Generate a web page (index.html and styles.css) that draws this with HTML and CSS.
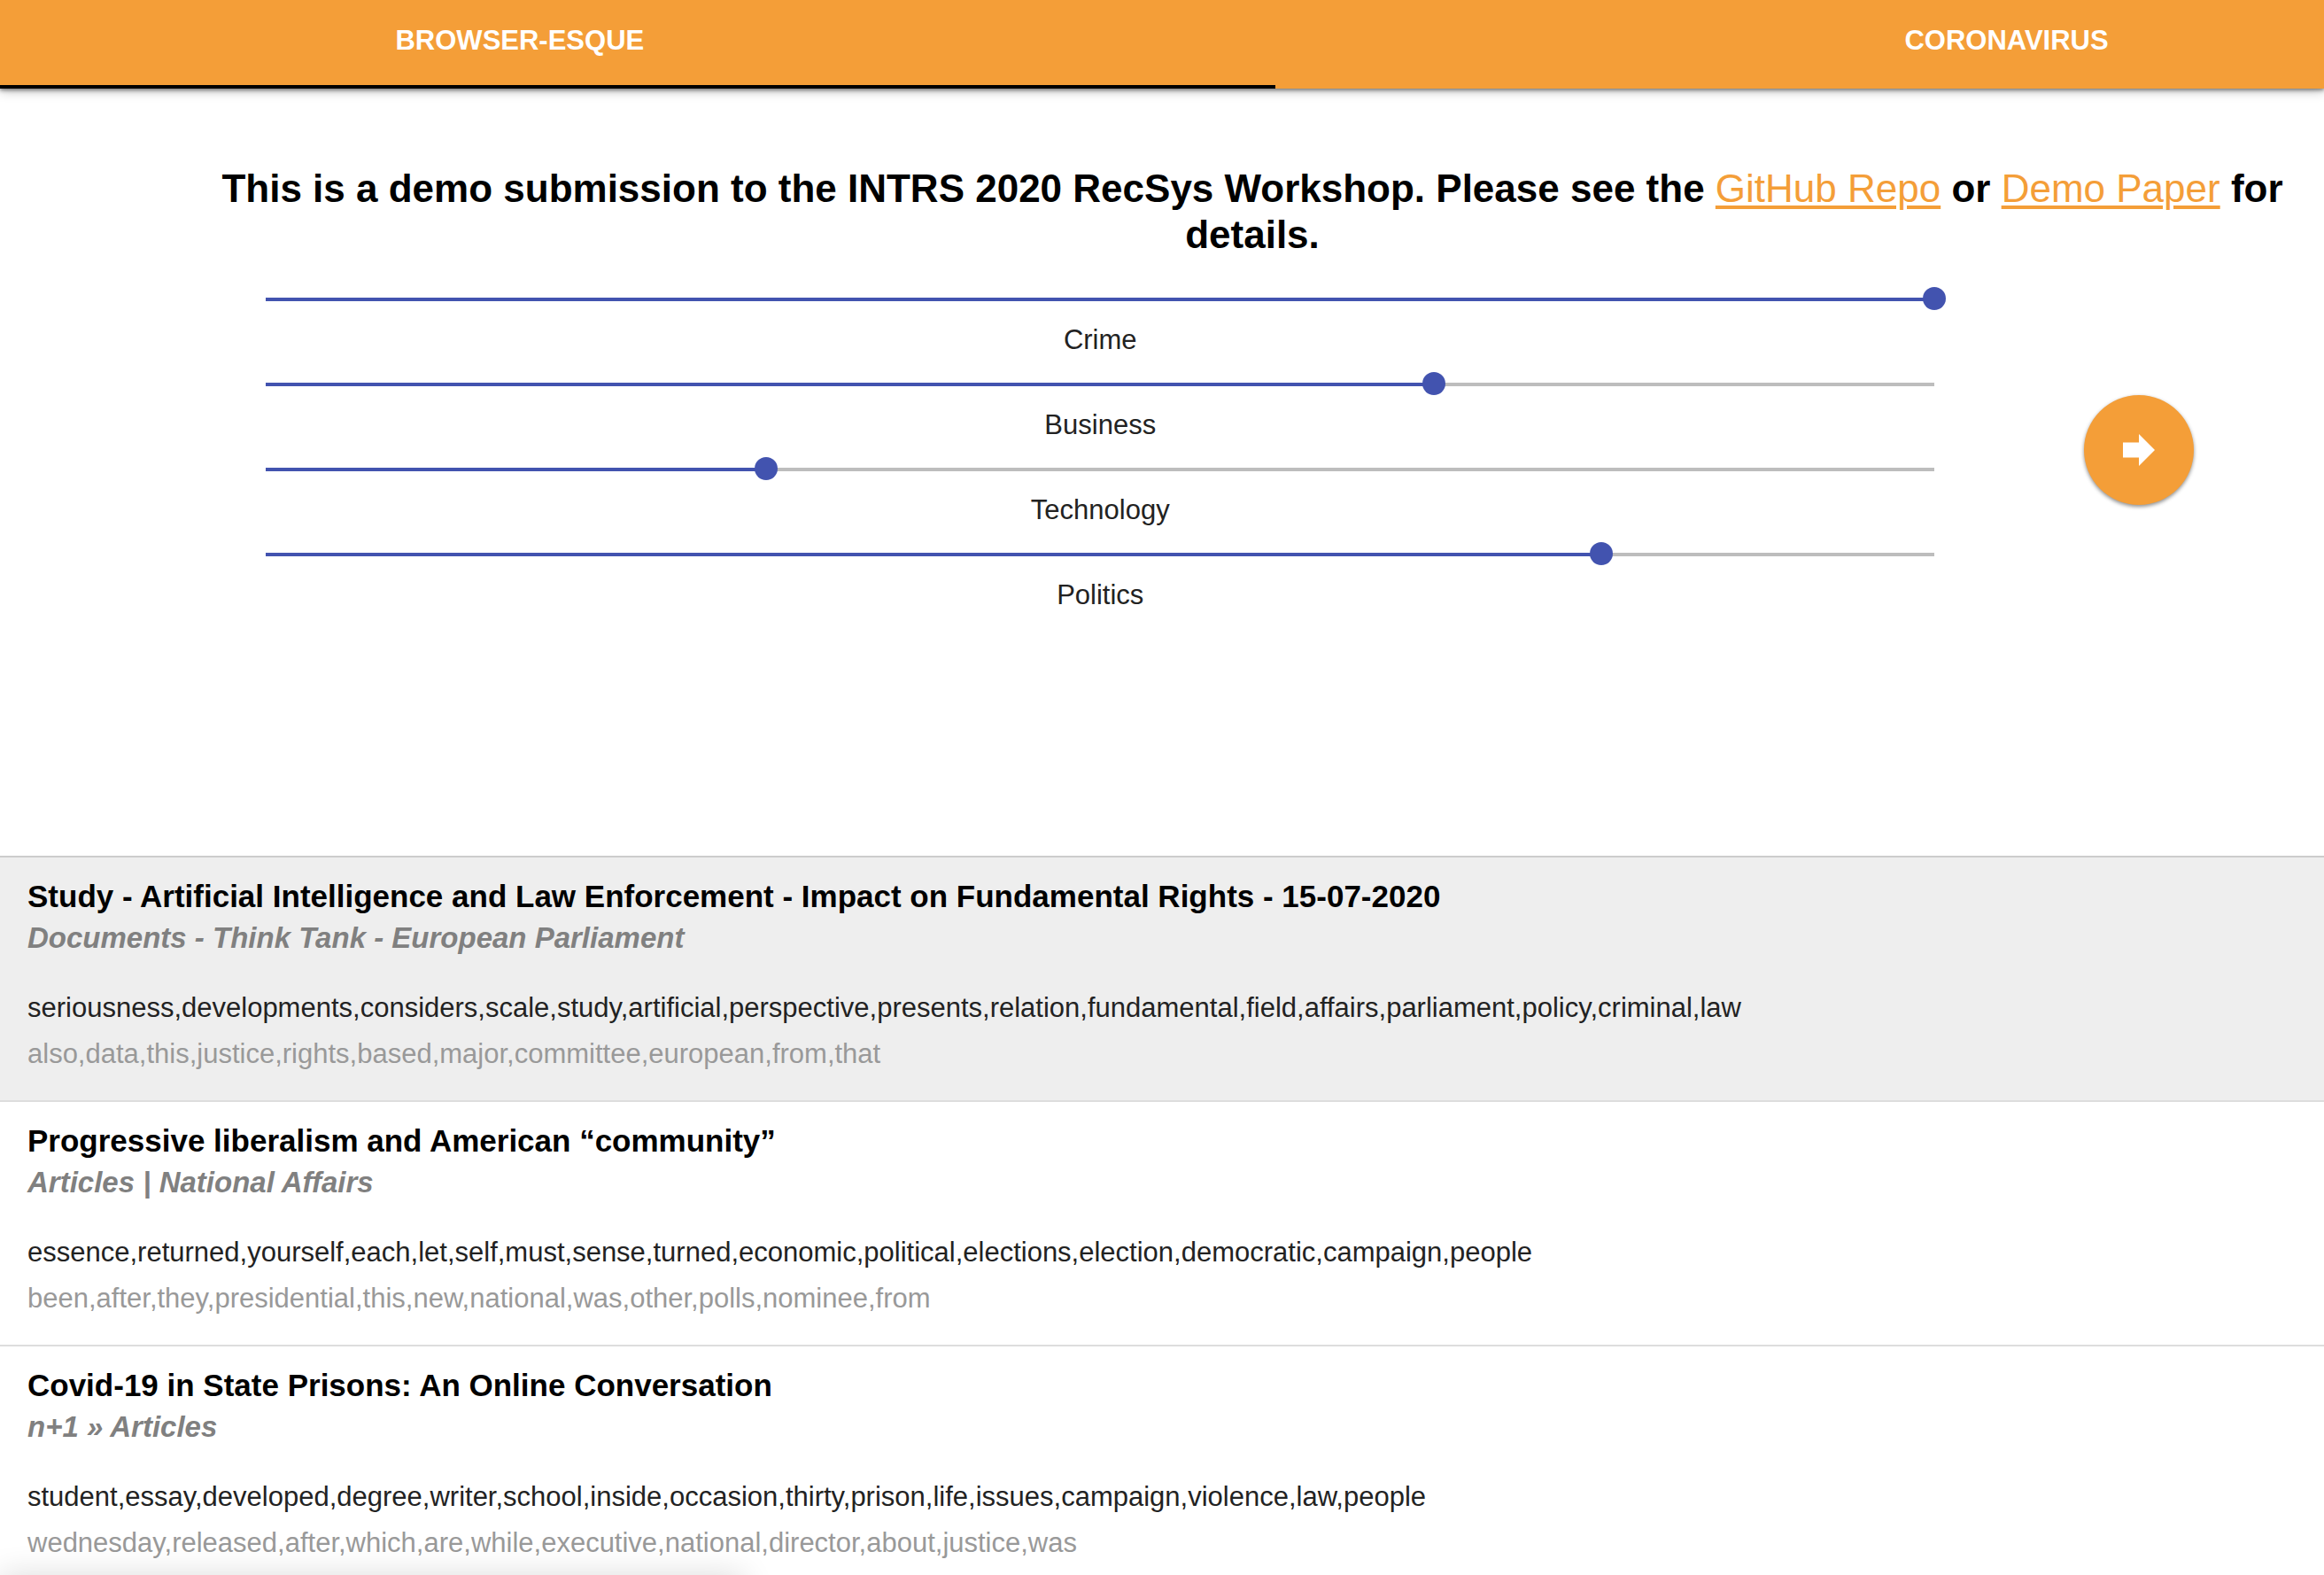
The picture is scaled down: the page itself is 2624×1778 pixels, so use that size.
FILE: index.html
```html
<!DOCTYPE html>
<html lang="en">
<head>
<meta charset="utf-8">
<title>Browser-esque</title>
<link rel="stylesheet" href="styles.css">
</head>
<body>
<nav class="tabs" role="tablist">
  <button class="tab tab-main is-active" role="tab" aria-selected="true">BROWSER-ESQUE</button>
  <button class="tab tab-side" role="tab" aria-selected="false">CORONAVIRUS</button>
</nav>
<main>
  <section class="intro">
    <h1 class="headline">This is a demo submission to the INTRS 2020 RecSys Workshop. Please see the <a href="#repo">GitHub Repo</a> or <a href="#paper">Demo Paper</a> for details.</h1>
    <form class="preferences">
      <div class="sliders">
        <div class="slider-row">
          <input class="slider" id="crime" type="range" min="0" max="100" value="100" style="--value: 1">
          <label for="crime">Crime</label>
        </div>
        <div class="slider-row">
          <input class="slider" id="business" type="range" min="0" max="100" value="70" style="--value: 0.7">
          <label for="business">Business</label>
        </div>
        <div class="slider-row">
          <input class="slider" id="technology" type="range" min="0" max="100" value="30" style="--value: 0.3">
          <label for="technology">Technology</label>
        </div>
        <div class="slider-row">
          <input class="slider" id="politics" type="range" min="0" max="100" value="80" style="--value: 0.8">
          <label for="politics">Politics</label>
        </div>
      </div>
      <div class="submit">
        <button class="go" type="button" aria-label="Go">
          <svg viewBox="0 0 36 36" width="36" height="36" aria-hidden="true"><path d="M0 9.5H18V0L36 18L18 36V26.5H0Z" fill="#fff"/></svg>
        </button>
      </div>
    </form>
  </section>
  <section class="articles">
    <article class="article is-selected">
      <h2 class="title">Study - Artificial Intelligence and Law Enforcement - Impact on Fundamental Rights - 15-07-2020</h2>
      <h3 class="source">Documents - Think Tank - European Parliament</h3>
      <p class="keywords">seriousness,developments,considers,scale,study,artificial,perspective,presents,relation,fundamental,field,affairs,parliament,policy,criminal,law</p>
      <p class="keywords minor">also,data,this,justice,rights,based,major,committee,european,from,that</p>
    </article>
    <article class="article">
      <h2 class="title">Progressive liberalism and American “community”</h2>
      <h3 class="source">Articles | National Affairs</h3>
      <p class="keywords">essence,returned,yourself,each,let,self,must,sense,turned,economic,political,elections,election,democratic,campaign,people</p>
      <p class="keywords minor">been,after,they,presidential,this,new,national,was,other,polls,nominee,from</p>
    </article>
    <article class="article">
      <h2 class="title">Covid-19 in State Prisons: An Online Conversation</h2>
      <h3 class="source">n+1 » Articles</h3>
      <p class="keywords">student,essay,developed,degree,writer,school,inside,occasion,thirty,prison,life,issues,campaign,violence,law,people</p>
      <p class="keywords minor">wednesday,released,after,which,are,while,executive,national,director,about,justice,was</p>
    </article>
  </section>
</main>
<div class="status-shadow"></div>
</body>
</html>
```

FILE: styles.css
```css
* {
  box-sizing: border-box;
}

:root {
  --orange: #f49e38;
  --blue: #4253af;
}

body {
  margin: 0;
  background: #fff;
  color: #222;
  font-family: "Liberation Sans", Arial, Helvetica, sans-serif;
  font-size: 31px;
  line-height: 40px;
  overflow-x: hidden;
}

h1,
h2,
h3,
p {
  margin: 0;
}

.tabs {
  display: flex;
  background: var(--orange);
  box-shadow: 0 2px 12px rgba(0, 0, 0, 0.3), 0 2px 4px rgba(0, 0, 0, 0.4);
}

.tab {
  height: 100px;
  padding: 0 0 4px;
  border: 0;
  border-bottom: 4px solid transparent;
  background: none;
  color: #fff;
  font: bold 31px/40px "Liberation Sans", Arial, Helvetica, sans-serif;
}

.tab-main {
  width: 54.88%;
  padding-right: 10.15%;
}

.tab-side {
  width: 45.12%;
  padding-left: 17.8%;
}

.is-active {
  border-bottom-color: #000;
}

.intro {
  padding: 87px 0 0 202px;
}

.headline {
  padding: 0 40px 0 42px;
  color: #000;
  font-size: 44px;
  line-height: 52px;
  text-align: center;
}

.headline a {
  color: var(--orange);
  font-weight: normal;
  text-decoration-thickness: 4px;
  text-underline-offset: 4px;
}

.preferences {
  display: flex;
  align-items: flex-start;
  padding: 32px 0 259px 85px;
}

.sliders {
  width: 81.75%;
}

.slider-row {
  display: flex;
  flex-direction: column;
  height: 96px;
}

.slider-row label {
  margin-top: 13px;
  text-align: center;
}

.slider {
  appearance: none;
  width: 100%;
  height: 28px;
  margin: 0;
  background: none;
}

.slider::-webkit-slider-runnable-track {
  height: 28px;
  background:
    linear-gradient(var(--blue), var(--blue)) 13px 13px / calc((100% - 26px) * var(--value)) 4px no-repeat,
    linear-gradient(#bdbdbd, #bdbdbd) 13px 13px / calc(100% - 26px) 4px no-repeat;
}

.slider::-webkit-slider-thumb {
  appearance: none;
  width: 26px;
  height: 26px;
  margin-top: 1px;
  border-radius: 50%;
  background: var(--blue);
}

.submit {
  display: flex;
  flex: 1;
  justify-content: center;
  padding: 123px 0 0 8px;
}

.go {
  display: flex;
  align-items: center;
  justify-content: center;
  width: 124px;
  height: 124px;
  padding: 0;
  border: 0;
  border-radius: 50%;
  background: var(--orange);
  box-shadow: 0 2px 4px rgba(0, 0, 0, 0.45);
}

.articles {
  border-top: 2px solid #ccc;
}

.article {
  padding: 20px 31px 26px;
  border-bottom: 2px solid #ddd;
}

.is-selected {
  background: #eee;
}

.title {
  color: #000;
  font-size: 35px;
  line-height: 48px;
}

.source {
  margin-bottom: 30px;
  color: #808080;
  font-size: 33px;
  font-style: italic;
  line-height: 46px;
}

.keywords {
  line-height: 52px;
}

.minor {
  color: #999;
}

.status-shadow {
  position: fixed;
  top: 100%;
  left: 0;
  width: 32%;
  height: 40px;
  box-shadow: 0 0 36px rgba(0, 0, 0, 0.14);
}
```
